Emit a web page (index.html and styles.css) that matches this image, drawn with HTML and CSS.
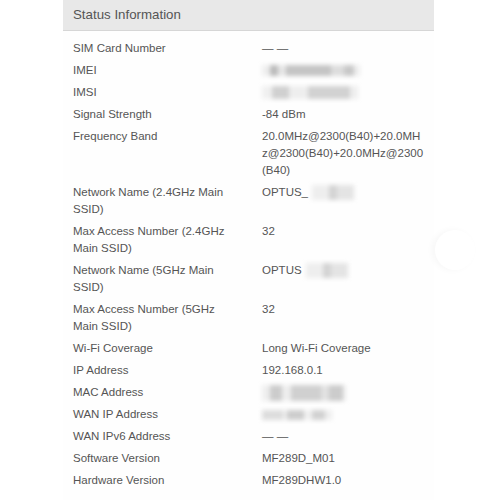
FILE: index.html
```html
<!DOCTYPE html>
<html lang="en">
<head>
  <meta charset="UTF-8">
  <title>Status Information</title>
  <link rel="stylesheet" href="styles.css">
</head>
<body>
  <div class="panel">
    <div class="panel-title">Status Information</div>
    <div class="info-list">
      <div class="row"><div class="label">SIM Card Number</div><div class="value">— —</div></div>
      <div class="row"><div class="label">IMEI</div><div class="value"><span class="masked m-imei"></span></div></div>
      <div class="row"><div class="label">IMSI</div><div class="value"><span class="masked m-imsi"></span></div></div>
      <div class="row"><div class="label">Signal Strength</div><div class="value">-84 dBm</div></div>
      <div class="row"><div class="label">Frequency Band</div><div class="value">20.0MHz@2300(B40)+20.0MHz@2300(B40)+20.0MHz@2300(B40)</div></div>
      <div class="row"><div class="label">Network Name (2.4GHz Main SSID)</div><div class="value">OPTUS_<span class="masked m-ssid"></span></div></div>
      <div class="row"><div class="label">Max Access Number (2.4GHz Main SSID)</div><div class="value">32</div></div>
      <div class="row"><div class="label">Network Name (5GHz Main SSID)</div><div class="value">OPTUS<span class="masked m-ssid"></span></div></div>
      <div class="row"><div class="label">Max Access Number (5GHz Main SSID)</div><div class="value">32</div></div>
      <div class="row"><div class="label">Wi-Fi Coverage</div><div class="value">Long Wi-Fi Coverage</div></div>
      <div class="row"><div class="label">IP Address</div><div class="value">192.168.0.1</div></div>
      <div class="row"><div class="label">MAC Address</div><div class="value"><span class="masked m-mac"></span></div></div>
      <div class="row"><div class="label">WAN IP Address</div><div class="value"><span class="masked m-wan"></span></div></div>
      <div class="row"><div class="label">WAN IPv6 Address</div><div class="value">— —</div></div>
      <div class="row"><div class="label">Software Version</div><div class="value">MF289D_M01</div></div>
      <div class="row"><div class="label">Hardware Version</div><div class="value">MF289DHW1.0</div></div>
    </div>
    <div class="side-btn"></div>
  </div>
</body>
</html>
```

FILE: styles.css
```css
body {
  margin: 0;
  background: #fff;
  font-family: "Liberation Sans", Arial, sans-serif;
  color: #555;
}
.panel {
  position: relative;
  width: 371px;
  margin-left: 63px;
  background: #fefefe;
  min-height: 500px;
}
.panel-title {
  height: 30px;
  line-height: 29px;
  padding-left: 10px;
  font-size: 13.3px;
  background: #e8e8e8;
  border-bottom: 1px solid #d6d6d6;
}
.info-list {
  display: flex;
  flex-direction: column;
  gap: 5px;
  padding: 9px 0 0 10px;
}
.row {
  display: grid;
  grid-template-columns: 189px 164px;
  font-size: 11.5px;
  line-height: 17px;
}
.label {
  padding-right: 24px;
}
.value {
  word-break: break-all;
}
.masked {
  display: inline-block;
  vertical-align: middle;
  background: linear-gradient(90deg, #eee 0 8%, #bbb 8% 16%, #e6e6e6 16% 24%, #c4c4c4 24% 70%, #ddd 70% 84%, #c8c8c8 84% 94%, #eee 94%);
  filter: blur(2px);
}
.m-imei { width: 98px; height: 11px; }
.m-imsi {
  width: 96px;
  height: 13px;
  background: linear-gradient(90deg, #f0f0f0 0 10%, #d0d0d0 10% 28%, #eee 28% 48%, #d2d2d2 48% 92%, #eee 92%);
}
.m-ssid {
  width: 42px;
  height: 15px;
  margin-left: 4px;
  background: linear-gradient(90deg, #eee 0 40%, #d4d4d4 40% 60%, #e4e4e4 60%);
}
.m-mac {
  width: 84px;
  height: 16px;
  background: linear-gradient(90deg, #eee 0 10%, #ccc 10% 24%, #eee 24% 34%, #d0d0d0 34% 70%, #e2e2e2 70% 80%, #ccc 80% 96%, #eee 96%);
}
.m-wan {
  width: 70px;
  height: 10px;
  background: linear-gradient(90deg, #ddd 0 30%, #eee 30% 36%, #cdcdcd 36% 60%, #f0f0f0 60% 72%, #d2d2d2 72% 90%, #eee 90%);
}
.side-btn {
  position: absolute;
  left: 372px;
  top: 230px;
  width: 40px;
  height: 40px;
  border-radius: 50%;
  background: #fff;
  box-shadow: -3px 0 6px rgba(0, 0, 0, 0.035);
}
```
